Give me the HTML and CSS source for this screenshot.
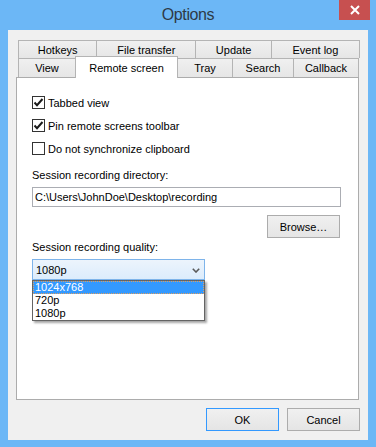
FILE: index.html
```html
<!DOCTYPE html>
<html>
<head>
<meta charset="utf-8">
<title>Options</title>
<link rel="stylesheet" href="styles.css">
</head>
<body>
<div class="window">
  <div class="titlebar">
    <span class="title">Options</span>
    <div class="close">
      <svg width="10" height="10" viewBox="0 0 10 10"><path d="M1 1 L9 9 M9 1 L1 9" stroke="#fff" stroke-width="2" fill="none"/></svg>
    </div>
  </div>
  <div class="client">
    <div class="tabs">
      <div class="tabrow">
        <div class="tab w-hotkeys">Hotkeys</div>
        <div class="tab w-transfer">File transfer</div>
        <div class="tab w-update">Update</div>
        <div class="tab w-events last">Event log</div>
      </div>
      <div class="tabrow">
        <div class="tab w-view">View</div>
        <div class="tab w-remote selected">Remote screen</div>
        <div class="tab w-tray">Tray</div>
        <div class="tab w-search">Search</div>
        <div class="tab w-callback last">Callback</div>
      </div>
    </div>
    <div class="panel">
      <div class="checks">
        <label class="check"><span class="box"><svg width="11" height="11" viewBox="0 0 11 11"><polyline points="1.5,5.5 4,8.2 9.5,2" stroke="#1a1a1a" stroke-width="2" fill="none"/></svg></span>Tabbed view</label>
        <label class="check"><span class="box"><svg width="11" height="11" viewBox="0 0 11 11"><polyline points="1.5,5.5 4,8.2 9.5,2" stroke="#1a1a1a" stroke-width="2" fill="none"/></svg></span>Pin remote screens toolbar</label>
        <label class="check"><span class="box"></span>Do not synchronize clipboard</label>
      </div>
      <div class="label dir-label">Session recording directory:</div>
      <div class="input">C:\Users\JohnDoe\Desktop\recording</div>
      <div class="browse-row"><div class="btn">Browse…</div></div>
      <div class="label quality-label">Session recording quality:</div>
      <div class="combo-wrap">
        <div class="combo">
          <span>1080p</span>
          <svg class="chev" width="8" height="5" viewBox="0 0 8 5"><polyline points="0.8,0.8 4,4 7.2,0.8" stroke="#5a5a5a" stroke-width="1.6" fill="none"/></svg>
        </div>
        <div class="list">
          <div class="item sel">1024x768</div>
          <div class="item">720p</div>
          <div class="item">1080p</div>
        </div>
      </div>
    </div>
    <div class="buttons">
      <div class="btn default">OK</div>
      <div class="btn">Cancel</div>
    </div>
  </div>
</div>
</body>
</html>
```
FILE: styles.css
```css
* { box-sizing: border-box; }
html, body { margin: 0; padding: 0; }
body {
  font-family: "Liberation Sans", Arial, sans-serif;
  font-size: 11px;
  color: #000;
  background: #6cb7f6;
}
.window {
  width: 376px;
  height: 447px;
  background: #6cb7f6;
  padding: 0 8px;
  display: flex;
  flex-direction: column;
}
.titlebar {
  height: 30px;
  position: relative;
  display: flex;
  justify-content: center;
  align-items: flex-start;
}
.title {
  font-size: 16px;
  letter-spacing: -0.4px;
  line-height: 30px;
  color: #2e3a46;
}
.close {
  position: absolute;
  top: 0;
  right: -2px;
  width: 31px;
  height: 20px;
  background: #c75050;
  display: flex;
  align-items: center;
  justify-content: center;
}
.client {
  width: 360px;
  height: 410px;
  background: #f0f0f0;
  padding: 10px 8px 0 8px;
  display: flex;
  flex-direction: column;
}
.tabs { margin-left: 2px; }
.tabrow { display: flex; }
.tabrow:first-child { height: 18px; }
.tabrow:last-child { height: 19px; align-items: flex-start; }
.tab {
  height: 100%;
  border-top: 1px solid #b4b4b4;
  border-left: 1px solid #b4b4b4;
  background: linear-gradient(#f0f0f0, #e6e6e6);
  display: flex;
  align-items: center;
  justify-content: center;
  white-space: nowrap;
}
.tab.last { border-right: 1px solid #b4b4b4; }
.tab.selected {
  height: 22px;
  margin-top: -2px;
  margin-right: -1px;
  border-right: 1px solid #b4b4b4;
  background: #fff;
  z-index: 2;
}
.w-hotkeys { width: 79px; }
.w-transfer { width: 100px; }
.w-update { width: 76px; }
.w-events { width: 90px; }
.w-view { width: 57px; }
.w-remote { width: 103px; }
.w-tray { width: 55px; }
.w-search { width: 61px; }
.w-callback { width: 66px; }
.panel {
  width: 343px;
  height: 323px;
  background: #fff;
  border: 1px solid #acacac;
  padding: 13px 17px 0 15px;
}
.checks { display: flex; flex-direction: column; }
.check {
  height: 23px;
  display: flex;
  align-items: center;
}
.box {
  width: 13px;
  height: 13px;
  border: 1px solid #333;
  background: #fff;
  margin-right: 3px;
  display: flex;
  align-items: center;
  justify-content: center;
}
.label { line-height: 15px; }
.dir-label { margin-top: 8px; }
.input {
  margin-top: 4px;
  height: 20px;
  border: 1px solid #abadb3;
  padding-left: 2px;
  line-height: 18px;
}
.browse-row {
  margin-top: 8px;
  display: flex;
  justify-content: flex-end;
  padding-right: 1px;
}
.btn {
  width: 73px;
  height: 23px;
  border: 1px solid #acacac;
  background: linear-gradient(#f0f0f0, #e5e5e5);
  display: flex;
  align-items: center;
  justify-content: center;
}
.btn.default { border-color: #3399ff; }
.quality-label { margin-top: 2px; }
.combo-wrap {
  margin-top: 4px;
  width: 173px;
  position: relative;
}
.combo {
  height: 21px;
  border: 1px solid #7eb4ea;
  background: linear-gradient(#ecf4fc, #dcecfc);
  display: flex;
  align-items: center;
  justify-content: space-between;
  padding: 0 4px 0 3px;
}
.chev { margin-top: 1px; }
.list {
  position: absolute;
  top: 100%;
  left: 0;
  width: 173px;
  border: 1px solid #646464;
  background: #fff;
  box-shadow: 2px 2px 2px rgba(0,0,0,0.35);
}
.item {
  height: 13px;
  line-height: 13px;
  padding-left: 2px;
}
.item.sel {
  background: #3399ff;
  color: #fff;
  outline: 1px dotted #e0a060;
  outline-offset: -1px;
}
.buttons {
  margin-top: 8px;
  display: flex;
  justify-content: flex-end;
  gap: 8px;
}
```
